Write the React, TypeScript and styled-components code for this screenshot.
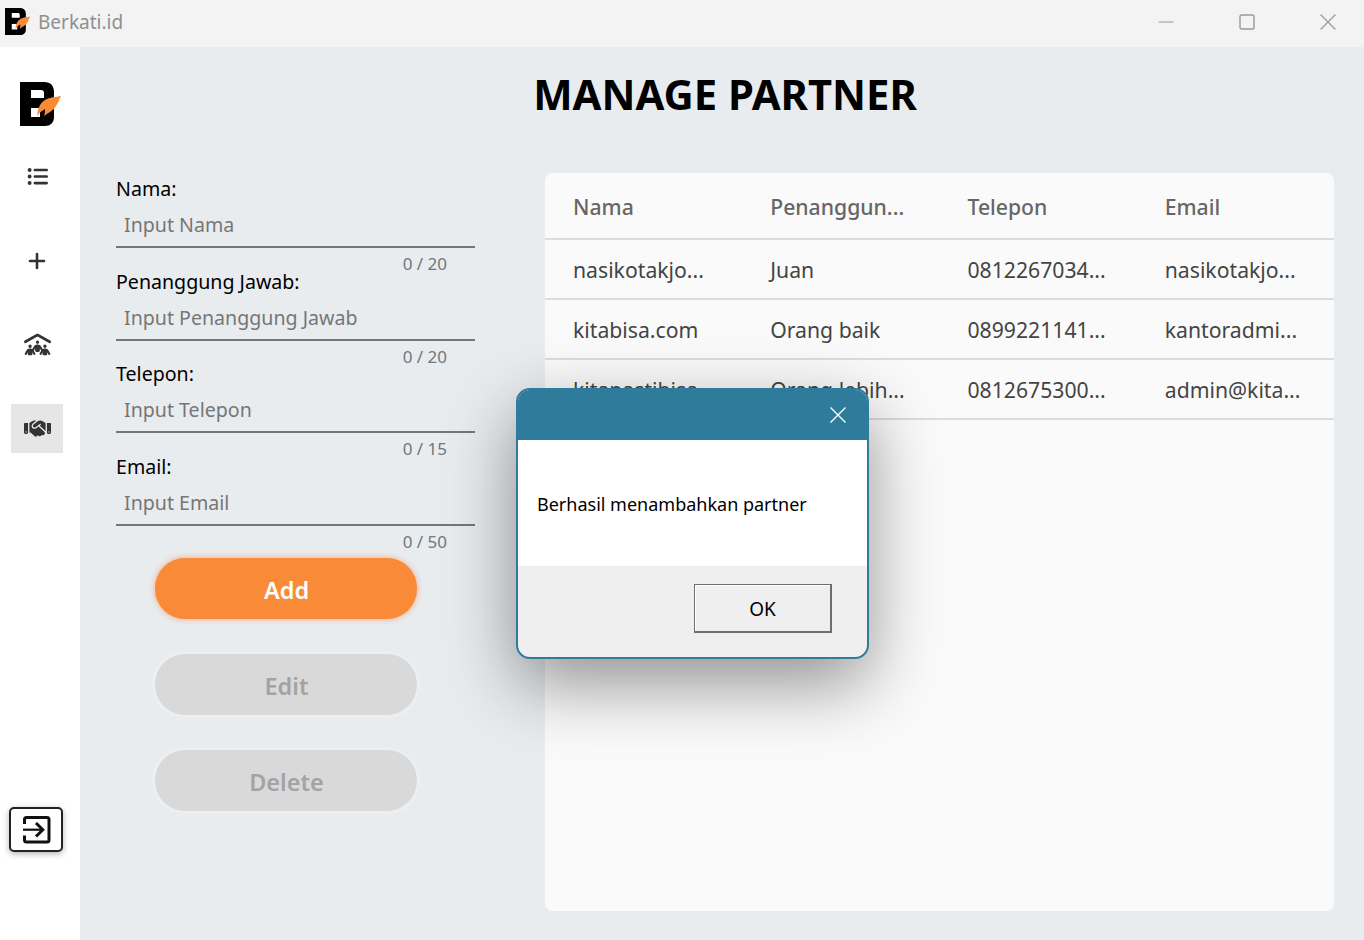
import styled, { createGlobalStyle } from 'styled-components'
import { FaHandshake, FaListUl, FaPeopleRoof } from 'react-icons/fa6'
import { FiPlus } from 'react-icons/fi'

const fields = [
  { label: 'Nama:', placeholder: 'Input Nama', count: '0 / 20' },
  { label: 'Penanggung Jawab:', placeholder: 'Input Penanggung Jawab', count: '0 / 20' },
  { label: 'Telepon:', placeholder: 'Input Telepon', count: '0 / 15' },
  { label: 'Email:', placeholder: 'Input Email', count: '0 / 50' },
]

const headers = ['Nama', 'Penanggun...', 'Telepon', 'Email']

const rows = [
  ['nasikotakjo...', 'Juan', '0812267034...', 'nasikotakjo...'],
  ['kitabisa.com', 'Orang baik', '0899221141...', 'kantoradmi...'],
  ['kitapastibisa', 'Orang lebih...', '0812675300...', 'admin@kita...'],
]

const Logo = ({ size }: { size: number }) => (
  <svg width={size} height={size} viewBox="0 0 44 44">
    <path
      d="M0 0H24C31 0 34 4 34 10V14C34 17 33 19 31 21C33 23 34 26 34 29V35C34 41 30 44 25 44H0Z"
      fill="#000"
    />
    <path d="M11 8H21C23 8 24 9 24 11V16H11Z" fill="#fff" />
    <path d="M11 26H20V35H11Z" fill="#fff" />
    <path
      d="M41 14C36 15 30 15 25 18C20 21 18 26 17 34C20 30 22 29 25 27C25 29 25 31 24 34C29 30 33 29 36 24C38 21 39 18 41 14Z"
      fill="#f98a38"
    />
  </svg>
)

export default function App() {
  return (
    <>
      <GlobalStyle />
      <AppWindow>
        <TitleBar>
          <TitleLeft>
            <Logo size={27} />
            <AppName>Berkati.id</AppName>
          </TitleLeft>
          <WindowControls>
            <ControlButton>
              <svg width="16" height="16" viewBox="0 0 16 16">
                <path d="M0.5 8H15.5" stroke="#999" strokeWidth="1" />
              </svg>
            </ControlButton>
            <ControlButton>
              <svg width="16" height="16" viewBox="0 0 16 16">
                <rect x="1" y="1" width="14" height="14" rx="1.5" fill="none" stroke="#999" strokeWidth="1.4" />
              </svg>
            </ControlButton>
            <ControlButton>
              <svg width="16" height="16" viewBox="0 0 16 16">
                <path d="M0.5 0.5L15.5 15.5M15.5 0.5L0.5 15.5" stroke="#999" strokeWidth="1.2" />
              </svg>
            </ControlButton>
          </WindowControls>
        </TitleBar>
        <Body>
          <Sidebar>
            <SideLogo>
              <Logo size={44} />
            </SideLogo>
            <NavItem>
              <FaListUl size={21} />
            </NavItem>
            <NavItem>
              <FiPlus size={24} strokeWidth={2.6} />
            </NavItem>
            <NavItem>
              <FaPeopleRoof size={27} />
            </NavItem>
            <NavItem $active>
              <FaHandshake size={27} />
            </NavItem>
            <LogoutButton>
              <svg width="30" height="30" viewBox="0 0 30 30" fill="none" stroke="#111" strokeWidth="3">
                <path d="M2.5 9V4.5C2.5 3.4 3.4 2.5 4.5 2.5H25C26.1 2.5 27 3.4 27 4.5V25C27 26.1 26.1 27 25 27H4.5C3.4 27 2.5 26.1 2.5 25V20.5" />
                <path d="M1 14.7H20" strokeWidth="2.2" />
                <path d="M14 8L20.8 14.7L14 21.5" />
              </svg>
            </LogoutButton>
          </Sidebar>
          <Main>
            <Title>MANAGE PARTNER</Title>
            <Content>
              <FormColumn>
                {fields.map((field) => (
                  <Field key={field.label}>
                    <Label>{field.label}</Label>
                    <TextInput placeholder={field.placeholder} readOnly />
                    <Counter>{field.count}</Counter>
                  </Field>
                ))}
                <Buttons>
                  <AddButton>Add</AddButton>
                  <DisabledButton>Edit</DisabledButton>
                  <DisabledButton>Delete</DisabledButton>
                </Buttons>
              </FormColumn>
              <TableCard>
                <PartnerTable>
                  <thead>
                    <tr>
                      {headers.map((header) => (
                        <HeadCell key={header}>{header}</HeadCell>
                      ))}
                    </tr>
                  </thead>
                  <tbody>
                    {rows.map((row, index) => (
                      <tr key={`row${index}`}>
                        {row.map((cell, cellIndex) => (
                          <Cell key={`cell${cellIndex}`}>{cell}</Cell>
                        ))}
                      </tr>
                    ))}
                  </tbody>
                </PartnerTable>
              </TableCard>
            </Content>
          </Main>
        </Body>
        <Dialog>
          <DialogHead>
            <svg width="18" height="18" viewBox="0 0 18 18">
              <path d="M1.5 1.5L16.5 16.5M16.5 1.5L1.5 16.5" stroke="#fff" strokeWidth="1.4" />
            </svg>
          </DialogHead>
          <DialogBody>Berhasil menambahkan partner</DialogBody>
          <DialogFoot>
            <OkButton>OK</OkButton>
          </DialogFoot>
        </Dialog>
      </AppWindow>
    </>
  )
}

const GlobalStyle = createGlobalStyle`
  html, body {
    margin: 0;
    padding: 0;
  }
  body {
    font-family: "Noto Sans", "Open Sans", sans-serif;
    background: #e9ecef;
    overflow: hidden;
  }
`

const AppWindow = styled.div`
  position: relative;
  width: 1364px;
  height: 940px;
  display: flex;
  flex-direction: column;
  overflow: hidden;
`

const TitleBar = styled.div`
  height: 47px;
  flex: none;
  background: #f3f3f3;
  display: flex;
  align-items: center;
  justify-content: space-between;
`

const TitleLeft = styled.div`
  display: flex;
  align-items: center;
  gap: 7px;
  padding-left: 5px;
  margin-top: -5px;
`

const AppName = styled.span`
  font-size: 19px;
  color: #8f8f8f;
  margin-top: 2px;
  margin-left: -1px;
`

const WindowControls = styled.div`
  display: flex;
  align-items: center;
  gap: 65px;
  padding-right: 28px;
  margin-top: -4px;
`

const ControlButton = styled.div`
  width: 16px;
  height: 16px;
  display: flex;
`

const Body = styled.div`
  flex: 1;
  display: flex;
  min-height: 0;
`

const Sidebar = styled.nav`
  width: 80px;
  flex: none;
  box-sizing: border-box;
  padding: 35px 17px 0 11px;
  background: #fff;
  display: flex;
  flex-direction: column;
  align-items: center;
  gap: 35px;
`

const SideLogo = styled.div`
  height: 44px;
  margin-left: 9px;
  margin-bottom: -9px;
`

const NavItem = styled.div<{ $active?: boolean }>`
  width: 52px;
  height: 49px;
  flex: none;
  display: flex;
  align-items: center;
  justify-content: center;
  color: #333;
  background: ${(p) => (p.$active ? '#e6e6e6' : 'transparent')};
`

const LogoutButton = styled.button`
  width: 54px;
  height: 45px;
  padding: 0 0 0 1px;
  margin-top: 319px;
  margin-right: 2px;
  box-sizing: border-box;
  flex: none;
  display: flex;
  align-items: center;
  justify-content: center;
  background: #fff;
  border: 2px solid #222;
  border-radius: 5px;
  box-shadow: 0 2px 6px rgba(0, 0, 0, 0.3);
`

const Main = styled.main`
  flex: 1;
  min-width: 0;
  display: flex;
  flex-direction: column;
  background: #e9ecef;
  padding: 0 30px 29px 36px;
`

const Title = styled.h1`
  margin: 16px 0 0;
  height: 110px;
  flex: none;
  text-align: center;
  font-size: 41.75px;
  font-weight: 700;
  line-height: 61px;
  color: #000;
`

const Content = styled.div`
  flex: 1;
  min-height: 0;
  display: flex;
  gap: 70px;
`

const FormColumn = styled.div`
  width: 359px;
  flex: none;
  display: flex;
  flex-direction: column;
`

const Field = styled.div`
  height: 92.5px;
  display: flex;
  flex-direction: column;
`

const Label = styled.label`
  font-size: 19.6px;
  line-height: 32px;
  color: #000;
`

const TextInput = styled.input`
  width: 100%;
  height: 43px;
  flex: none;
  box-sizing: border-box;
  padding: 0 8px 2px;
  border: none;
  border-bottom: 2px solid #767676;
  background: transparent;
  font-family: inherit;
  font-size: 19.6px;
  outline: none;
  &::placeholder {
    color: #767676;
    opacity: 1;
  }
`

const Counter = styled.span`
  align-self: flex-end;
  padding-right: 28px;
  margin-top: 4px;
  font-size: 17px;
  line-height: 24px;
  color: #6f7780;
`

const Buttons = styled.div`
  margin-top: 15px;
  padding-left: 39px;
  display: flex;
  flex-direction: column;
  gap: 35px;
`

const PillButton = styled.button`
  width: 262px;
  height: 61px;
  padding: 3px 0 0 1px;
  border: none;
  border-radius: 30px;
  font-family: inherit;
  font-size: 23.5px;
  font-weight: 600;
`

const AddButton = styled(PillButton)`
  background: #f98a38;
  color: #fff;
  box-shadow: 0 0 6px rgba(249, 120, 60, 0.6);
`

const DisabledButton = styled(PillButton)`
  background: #d9d9d9;
  color: #a3a3a3;
  box-shadow: 0 0 6px rgba(255, 255, 255, 0.5);
`

const TableCard = styled.div`
  flex: 1;
  min-width: 0;
  background: #fafafa;
  border-radius: 8px;
  overflow: hidden;
`

const PartnerTable = styled.table`
  width: 100%;
  table-layout: fixed;
  border-collapse: collapse;
`

const HeadCell = styled.th`
  height: 66px;
  padding: 2px 0 0 28px;
  box-sizing: border-box;
  text-align: left;
  font-size: 21.2px;
  font-weight: 500;
  color: #666;
  border-bottom: 2px solid #dcdcdc;
`

const Cell = styled.td`
  height: 60px;
  padding: 0 0 0 28px;
  box-sizing: border-box;
  font-size: 21.2px;
  color: #444;
  border-bottom: 2px solid #dcdcdc;
  white-space: nowrap;
`

const Dialog = styled.div`
  position: absolute;
  left: 516px;
  top: 388px;
  width: 353px;
  height: 271px;
  box-sizing: border-box;
  display: flex;
  flex-direction: column;
  background: #efefef;
  border: 2px solid #2e7b9b;
  border-radius: 14px;
  overflow: hidden;
  box-shadow: 0 25px 70px rgba(0, 0, 0, 0.42);
`

const DialogHead = styled.div`
  height: 50px;
  flex: none;
  display: flex;
  align-items: center;
  justify-content: flex-end;
  padding: 0 20px 0 0;
  background: #2e7b9b;
`

const DialogBody = styled.div`
  height: 126px;
  flex: none;
  box-sizing: border-box;
  display: flex;
  align-items: center;
  padding: 2px 0 0 19px;
  background: #fff;
  font-size: 18px;
  color: #000;
`

const DialogFoot = styled.div`
  flex: 1;
  display: flex;
  justify-content: flex-end;
  padding: 18px 35px 0 0;
`

const OkButton = styled.button`
  width: 138px;
  height: 49px;
  padding: 2px 0 0;
  box-sizing: border-box;
  background: #efefef;
  border: 2px solid #6e6e6e;
  border-top-width: 1px;
  border-left-width: 1px;
  box-shadow: inset 1px 1px 0 #fff;
  font-family: inherit;
  font-size: 19px;
  color: #000;
`
